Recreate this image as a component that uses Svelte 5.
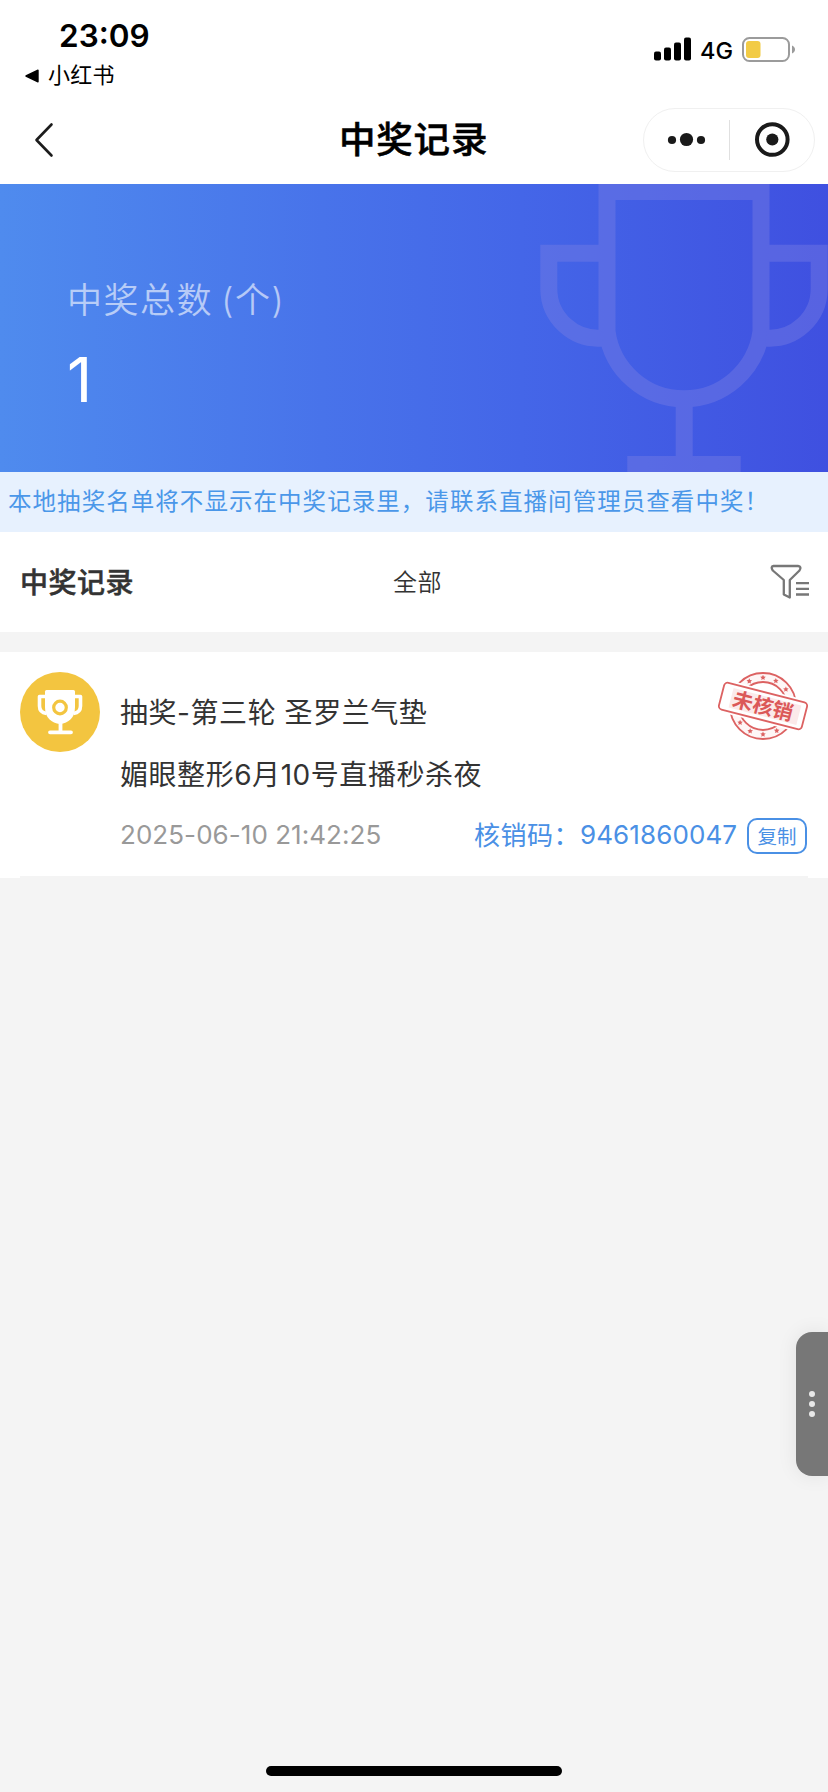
<script>
  const status = { time: '23:09', backApp: '小红书', network: '4G' };
  const total = 1;
  const records = [
    {
      title: '抽奖-第三轮 圣罗兰气垫',
      room: '媚眼整形6月10号直播秒杀夜',
      time: '2025-06-10 21:42:25',
      code: '9461860047',
      state: '未核销'
    }
  ];
  // Star angles on the upper and lower halves of the stamp
  const stars = [-119, -90, -63, -36, 61, 90, 117, 144];
  const starPoints = Array.from({ length: 10 }, (_, i) => {
    const r = i % 2 ? 1.4 : 2.9;
    const a = (i * 36 - 90) * (Math.PI / 180);
    return `${(r * Math.cos(a)).toFixed(2)},${(r * Math.sin(a)).toFixed(2)}`;
  }).join(' ');
  const rad = (d) => (d * Math.PI) / 180;
</script>

<div class="page">
  <header>
    <div class="status">
      <div class="left">
        <div class="time">{status.time}</div>
        <div class="back-app">
          <svg width="14" height="14" viewBox="0 0 14 14"><path d="M1 7 13 1.2V12.8Z" stroke="#000" stroke-width="1.4" stroke-linejoin="round" /></svg>
          <span>{status.backApp}</span>
        </div>
      </div>
      <div class="right">
        <svg width="38" height="24" viewBox="0 0 38 24">
          <rect x="0" y="14.5" width="7" height="9" rx="2" />
          <rect x="10" y="10.5" width="7" height="13" rx="2" />
          <rect x="20" y="5.5" width="7" height="18" rx="2" />
          <rect x="30" y="0.5" width="7" height="23" rx="2" />
        </svg>
        <span class="net">{status.network}</span>
        <svg width="54" height="26" viewBox="0 0 54 26">
          <rect x="1" y="1" width="46" height="23" rx="6.5" fill="none" stroke="#9b9b9b" stroke-width="2" />
          <rect x="4" y="4" width="14.5" height="17" rx="3" fill="#f2cb45" />
          <path d="M50 8.5c4 1.5 4 6.500 0 8Z" fill="#9b9b9b" />
        </svg>
      </div>
    </div>
    <nav>
      <svg class="chev" width="20" height="36" viewBox="0 0 20 36"><path d="M17.500 2.500 2.500 18 17.500 33.500" fill="none" stroke="#1c1c1c" stroke-width="2.600" stroke-linecap="round" stroke-linejoin="round" /></svg>
      <h1>中奖记录</h1>
      <div class="capsule">
        <svg width="170" height="62" viewBox="0 0 170 62">
          <g fill="#1a1a1a">
            <circle cx="28" cy="31" r="4.100" />
            <circle cx="42.500" cy="30.500" r="6.600" />
            <circle cx="57" cy="31" r="4.100" />
            <circle cx="128.300" cy="30.500" r="6.100" />
          </g>
          <circle cx="128.300" cy="30.500" r="15.300" fill="none" stroke="#1a1a1a" stroke-width="4" />
          <path d="M85.500 11V51" stroke="#e0e0e0" />
        </svg>
      </div>
    </nav>
  </header>

  <section class="banner">
    <div class="sum">
      <div class="label">中奖总数 (个)</div>
      <div class="num">{total}</div>
    </div>
    <svg width="308" height="288" viewBox="0 0 308 288">
      <g opacity="0.4" fill="none" stroke="#7c80e4" stroke-width="17">
        <path d="M87 0V147.500A77.700 77.700 0 0 0 241 147.500V0" />
        <path d="M95 8H233" stroke-width="16" />
        <path d="M79 69.200H28.800V105A49.500 49.500 0 0 0 82 154" />
        <path d="M249 69.200H299.200V105A49.500 49.500 0 0 1 246 154" />
        <path d="M164.200 219V273" />
        <path d="M107.300 280H220.700" stroke-width="16" />
      </g>
    </svg>
  </section>

  <p class="notice">本地抽奖名单将不显示在中奖记录里，请联系直播间管理员查看中奖！</p>

  <section class="filter">
    <h2>中奖记录</h2>
    <span class="all">全部</span>
    <svg width="40" height="36" viewBox="0 0 40 36" fill="none" stroke="#777" stroke-width="2.300">
      <path d="M3.500 2H28Q32 2.500 29.500 6.500L19.800 16V33.500L13.800 30.500V16L2.800 6.500Q.2 2.500 3.500 2Z" stroke-linejoin="round" />
      <path d="M26 19.200H39M26 24.800H39M26 30.500H39" />
    </svg>
  </section>

  <main>
    {#each records as r}
      <article>
        <svg class="cup" width="80" height="80" viewBox="0 0 80 80">
          <circle cx="40" cy="40" r="40" fill="#f3c540" />
          <path d="M26.500 18H53.500Q55 18 55 19.500V35C55 46 48.500 51 40 52C31.500 51 25 46 25 35V19.500Q25 18 26.500 18Z" fill="#fff" />
          <path d="M26 24.500H19.500V34Q19.500 40.500 26.500 41.500M54 24.500H60.500V34Q60.500 40.500 53.500 41.500" fill="none" stroke="#fff" stroke-width="3.600" stroke-linejoin="round" />
          <path d="M40.500 50V59M30 60.300H51" stroke="#fff" stroke-width="3.800" stroke-linecap="round" />
          <circle cx="40" cy="35.500" r="6.300" fill="none" stroke="#f3c540" stroke-width="3.200" />
        </svg>
        <div class="body">
          <div class="title">{r.title}</div>
          <div class="room">{r.room}</div>
          <div class="meta">
            <time>{r.time}</time>
            <span class="code-label">核销码：</span>
            <span class="code">{r.code}</span>
            <button>复制</button>
          </div>
        </div>
        <svg class="stamp" width="92" height="72" viewBox="0 0 92 72">
          <g transform="translate(46 36)" fill="none" stroke="#dc6262" stroke-width="1.800">
            <circle r="33" fill="#fef6f6" />
            <circle r="24" fill="#fff" />
            <g fill="#dc6262" stroke="none">
              {#each stars as a}
                <polygon points={starPoints} transform={`translate(${28.3 * Math.cos(rad(a))} ${28.3 * Math.sin(rad(a))})`} />
              {/each}
            </g>
            <g transform="rotate(14.500)">
              <rect x="-45" y="-16.500" width="90" height="33" fill="#fff" stroke="none" />
              <rect x="-42.800" y="-13.800" width="85.600" height="27.600" rx="3.500" fill="#fff" />
              <rect x="-33" y="-10" width="70" height="20" fill="#fbeaea" stroke="none" />
              <text x="0" y="7.500" text-anchor="middle" class="state">{r.state}</text>
            </g>
          </g>
        </svg>
      </article>
    {/each}
  </main>

  <div class="handle"><i></i><i></i><i></i></div>
  <div class="home"></div>
</div>

<style>
  :global(body) { background: #f4f4f4; }
  .page {
    position: relative;
    box-sizing: border-box;
    width: 828px;
    height: 1792px;
    overflow: hidden;
    background: #f4f4f4;
    color: #333;
    font-family: Inter, 'Noto Sans CJK SC', sans-serif;
  }
  svg { display: block; flex: none; }
  header { height: 184px; background: #fff; color: #000; }
  .status { display: flex; justify-content: space-between; height: 96px; }
  .left { padding: 16px 0 0 25px; }
  .time { padding-left: 34px; font-size: 31.500px; line-height: 40px; font-weight: 600; }
  .back-app { display: flex; align-items: center; gap: 9px; height: 40px; font-size: 22px; letter-spacing: .3px; }
  .back-app span { line-height: 36px; padding-bottom: 3px; }
  .right { display: flex; height: 26px; padding: 37px 32px 0 0; }
  .net { width: 42px; padding-left: 8px; font-size: 23.500px; font-weight: 500; line-height: 27px; }
  nav { display: flex; align-items: center; height: 88px; padding: 0 13px 0 34px; }
  h1 { flex: 1; margin: 0 0 0 285px; font-size: 36.500px; line-height: 54px; font-weight: 500; letter-spacing: .8px; -webkit-text-stroke: .5px #000; }
  .capsule { width: 170px; height: 62px; border: 1px solid #f0f0f0; border-radius: 32px; }

  .banner { display: flex; justify-content: space-between; height: 288px; background: linear-gradient(90deg, #4f8bee 0%, #4873ea 39%, #4466e8 63%, #3f50e0 100%); }
  .sum { padding: 90px 0 0 67px; color: #fff; }
  .label { font-size: 35px; line-height: 52px; font-weight: 350; letter-spacing: 1.500px; word-spacing: -3px; opacity: .6; white-space: nowrap; }
  .num { padding-top: 16px; font-size: 62px; line-height: 76px; }

  .notice { margin: 0; height: 60px; padding-left: 8px; background: #e7f1fe; color: #4a97e9; font-size: 23.500px; line-height: 60px; letter-spacing: 1.050px; font-weight: 400; white-space: nowrap; }

  .filter { display: flex; align-items: center; height: 100px; padding: 0 18px 0 20px; background: #fff; }
  h2 { margin: 0; width: 373px; padding-bottom: 2px; font-size: 28px; font-weight: 500; letter-spacing: .5px; -webkit-text-stroke: .5px #333; }
  .all { flex: 1; padding-bottom: 4px; font-size: 24px; font-weight: 350; letter-spacing: .4px; }

  main { padding-top: 20px; }
  article { position: relative; display: flex; height: 206px; padding: 20px 20px 0; background: #fff; }
  article::after { content: ''; position: absolute; left: 20px; right: 20px; bottom: 0; height: 2px; background: #f4f4f4; }
  .body { flex: 1; padding-left: 20px; }
  .title, .room { font-size: 28px; line-height: 42px; letter-spacing: .55px; font-weight: 400; }
  .title { padding-top: 20px; }
  .room { padding-top: 20px; }
  .meta { display: flex; align-items: center; height: 40px; margin-top: 19px; font-size: 26px; white-space: nowrap; color: #4a90e5; }
  time { width: 354px; color: #999; letter-spacing: .05px; margin-top: -1px; }
  .code-label { width: 106px; letter-spacing: .5px; font-weight: 400; margin-top: -4px; }
  .code { width: 167px; letter-spacing: .1px; margin-top: -1px; }
  button { box-sizing: border-box; width: 60px; height: 36px; margin-top: 1px; padding: 0; border: 2px solid #4a90e5; border-radius: 10px; background: #fff; color: #4a90e5; font: 400 19.500px/30px 'Noto Sans CJK SC', sans-serif; }
  .stamp { position: absolute; top: 18px; right: 19px; }
  .state { fill: #db5858; stroke: none; font: 700 20.500px 'Noto Sans CJK SC', sans-serif; }

  .handle { position: absolute; right: 0; top: 1332px; display: flex; flex-direction: column; align-items: center; justify-content: center; gap: 4px; width: 32px; height: 144px; border-radius: 16px 0 0 16px; background: #777; box-shadow: 0 0 20px rgba(0, 0, 0, .08); }
  .handle i { width: 6px; height: 6px; border-radius: 50%; background: #e8e8e8; }
  .home { position: absolute; left: 266px; top: 1766px; width: 296px; height: 10px; border-radius: 5px; background: #000; }
</style>
